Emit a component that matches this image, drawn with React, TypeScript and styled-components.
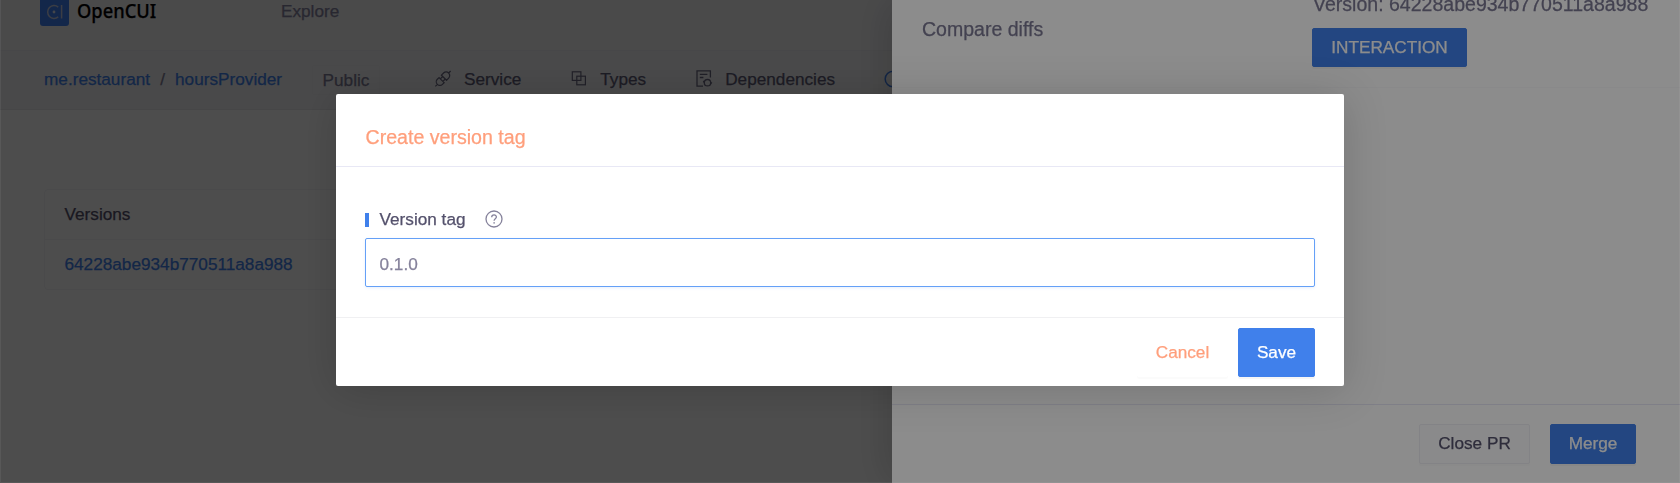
import React from "react";
import styled, { createGlobalStyle } from "styled-components";

const primary = "#4080eb";
const ink = "#54516c";

const GlobalStyle = createGlobalStyle`
  * { box-sizing: border-box; }
  html, body { margin: 0; height: 100%; overflow: hidden; }
  body {
    font-family: "Liberation Sans", Arial, sans-serif;
    font-size: 17.2px;
    line-height: 20px;
    color: ${ink};
    background: #fff;
    -webkit-text-stroke: 0.25px;
  }
`;

const Page = styled.div`
  height: 483px;
  overflow: hidden;
  background: #fff;
`;

const TopBar = styled.header`
  display: flex;
  align-items: flex-start;
  height: 51px;
  padding-left: 40px;
  background: #f3f3f6;
  border-bottom: 1px solid #ececf0;
`;

const LogoMark = styled.svg`
  display: block;
  width: 29px;
  height: 29px;
  margin-top: -3px;
`;

const Brand = styled.span`
  width: 203px;
  margin-left: 8px;
  font-family: "Noto Sans", sans-serif;
  font-size: 20px;
  font-weight: 500;
  line-height: 22px;
  color: #000;
  transform: scaleX(0.915);
  transform-origin: 0 0;
`;

const TopLink = styled.span`
  margin-left: 1px;
  padding-top: 1px;
  color: #8583a0;
`;

const SubBar = styled.nav`
  display: flex;
  align-items: flex-start;
  height: 59px;
  padding: 14px 0 0 44px;
  white-space: nowrap;
  background: #f2f2f5;
  border-bottom: 1px solid #e6e6ea;
`;

const Crumbs = styled.div`
  display: flex;
  width: 268px;
  padding-top: 4px;
  color: #7c7a94;
`;

const Link = styled.span`
  color: ${primary};
`;

const Slash = styled.span`
  width: 25px;
  text-align: center;
`;

const Tag = styled.span`
  width: 68px;
  height: 30px;
  padding-top: 4px;
  text-align: center;
  color: #7c7a94;
  border: 1px solid #eeeef2;
  border-radius: 2px;
`;

const Tab = styled.div<{ $left: number; $gap: number }>`
  display: flex;
  gap: ${(p) => p.$gap}px;
  margin-left: ${(p) => p.$left}px;
  padding-top: 4px;
  color: #5d5a75;
  svg { display: block; margin-top: 1px; }
`;

const Card = styled.section`
  width: 1590px;
  margin: 79px 0 0 44px;
  border: 1px solid #f5f5f8;
  border-radius: 4px;
`;

const CardRow = styled.div<{ $head?: boolean }>`
  height: ${(p) => (p.$head ? 50 : 49)}px;
  padding: 14px 19.5px 0;
  color: ${(p) => (p.$head ? ink : primary)};
  border-bottom: ${(p) => (p.$head ? "1px solid #f5f5f8" : "0")};
`;

const Mask = styled.div`
  position: fixed;
  inset: 0;
  display: flex;
  background: rgba(0, 0, 0, 0.45);
`;

const Drawer = styled.aside`
  display: flex;
  flex-direction: column;
  width: 788px;
  height: 100%;
  margin-left: auto;
  background: #fff;
  box-shadow: -6px 0 38px rgba(0, 0, 0, 0.15);
`;

const DrawerHead = styled.div`
  display: flex;
  justify-content: space-between;
  flex: none;
  height: 88px;
  padding: 0 29px 0 30px;
  font-size: 19.55px;
  line-height: 22px;
  color: #7b7893;
  border-bottom: 1px solid #f9f9fb;
`;

const DrawerTitle = styled.div`
  padding-top: 18px;
`;

const VersionInfo = styled.div`
  width: 339px;
`;

const VersionLine = styled.div`
  height: 28px;
  margin-top: -7px;
  margin-bottom: 7px;
  padding-left: 1px;
  white-space: nowrap;
`;

const DrawerBody = styled.div`
  flex: 1;
`;

const DrawerFoot = styled.footer`
  display: flex;
  flex: none;
  justify-content: flex-end;
  height: 79px;
  gap: 20px;
  padding: 19px 44px 0 0;
  border-top: 1px solid #e7e7f6;
`;

const Button = styled.button<{
  $w: number;
  $h: number;
  $kind: "primary" | "plain" | "text";
}>`
  width: ${(p) => p.$w}px;
  height: ${(p) => p.$h}px;
  padding: 0 0 2px;
  font: inherit;
  font-size: 17.2px;
  line-height: 20px;
  text-align: center;
  border-radius: 2px;
  border: 1px solid ${(p) =>
    p.$kind === "plain" ? "#efeff5" : p.$kind === "primary" ? primary : "transparent"};
  background: ${(p) =>
    p.$kind === "primary" ? primary : p.$kind === "plain" ? "#fcfcfd" : "#fff"};
  color: ${(p) =>
    p.$kind === "primary" ? "#fff" : p.$kind === "plain" ? ink : "#ff9f7c"};
  box-shadow: 0 2px 0 rgba(0, 0, 0, ${(p) => (p.$kind === "primary" ? 0.035 : 0.016)});
`;

const Modal = styled.div`
  display: flex;
  flex-direction: column;
  width: 1008px;
  height: 292px;
  margin: 94px auto 0;
  background: #fff;
  border-radius: 2px;
  box-shadow: 0 4px 44px rgba(0, 0, 0, 0.17);
`;

const ModalHead = styled.header`
  height: 73px;
  padding: 32px 29.5px 0;
  font-size: 19.6px;
  line-height: 22px;
  color: #ff9f7c;
  border-bottom: 1px solid #e8e8f5;
`;

const ModalBody = styled.div`
  flex: 1;
  padding: 42px 29px 0;
`;

const FieldLabel = styled.div`
  display: flex;
  height: 29px;
  svg { display: block; margin: 1px 0 0 19px; }
`;

const Marker = styled.span`
  width: 4px;
  height: 14px;
  margin: 4px 10.5px 0 0;
  background: ${primary};
`;

const Input = styled.input`
  display: block;
  width: 950px;
  height: 49px;
  padding: 3px 13.5px 0;
  font: inherit;
  color: #85829b;
  border: 1px solid #65a0f7;
  border-radius: 2px;
  outline: none;
  box-shadow: 0 1px 3px rgba(64, 128, 235, 0.12);
`;

const ModalFoot = styled.footer`
  display: flex;
  justify-content: flex-end;
  height: 69px;
  gap: 10px;
  padding: 10px 29px 0 0;
  border-top: 1px solid #f0f0f2;
`;

const WindowEdge = styled.div`
  position: fixed;
  inset: 0;
  pointer-events: none;
  border: solid rgba(255, 255, 255, 0.06);
  border-width: 0 1px 1px 1px;
`;

const Logo = () => (
  <LogoMark viewBox="0 0 29 29" fill="none">
    <rect width="29" height="29" rx="3" fill="#4080f5" />
    <path d="M18.2 10.1A6.4 6.4 0 1 0 18.2 19.9" stroke="#c3cbe0" strokeWidth="1.5" />
    <circle cx="14" cy="15" r="1.4" fill="#dfe6f5" />
    <path d="M21.6 8V21.5" stroke="#c3cbe0" strokeWidth="1.5" />
  </LogoMark>
);

const ServiceIcon = () => (
  <svg width="18" height="18" viewBox="0 0 18 18" fill="none" stroke="#6a6880" strokeWidth="1.25">
    <g transform="translate(9 8.7) rotate(-45)">
      <path d="M-10.8 0H-8M-2 -3.6H-4.4A3.6 3.6 0 0 0 -4.4 3.6H-2ZM-2 -1.8H1.4M-2 1.8H1.4" />
      <path d="M10.8 0H8M1.4 -3.6H4.4A3.6 3.6 0 0 1 4.4 3.6H1.4Z" />
    </g>
  </svg>
);

const TypesIcon = () => (
  <svg width="16" height="18" viewBox="0 0 16 18" fill="none" stroke="#6a6880" strokeWidth="1.2">
    <rect x="1.3" y="1.8" width="8.6" height="8.6" />
    <rect x="5.8" y="6.2" width="8.6" height="8.6" />
  </svg>
);

const DependenciesIcon = () => (
  <svg width="17" height="18" viewBox="0 0 17 18" fill="none" stroke="#6a6880" strokeWidth="1.3">
    <path d="M7 16.2H1V0.8H14.4V7.5M3.8 4.3H11.4M3.8 7.5H7.4" />
    <circle cx="11.5" cy="12.7" r="3.2" />
    <path d="M7.3 11 8.6 12.8M14.4 14.2 15.8 12.4" />
  </svg>
);

const RingIcon = () => (
  <svg width="18" height="19" viewBox="0 0 18 19" fill="none" stroke={primary} strokeWidth="1.5">
    <circle cx="9" cy="9" r="7.8" />
  </svg>
);

const HelpIcon = () => (
  <svg width="18" height="18" viewBox="0 0 18 18" fill="none" stroke="#85829b" strokeWidth="1.3">
    <circle cx="9" cy="9" r="8" />
    <path d="M6.7 7.2C6.7 4.2 11.4 4.2 11.4 7C11.4 8.7 9.1 8.8 9.1 10.7" />
    <circle cx="9.1" cy="12.9" r="0.8" fill="#85829b" stroke="none" />
  </svg>
);

export default function App() {
  return (
    <>
      <GlobalStyle />
      <Page>
        <TopBar>
          <Logo />
          <Brand>OpenCUI</Brand>
          <TopLink>Explore</TopLink>
        </TopBar>
        <SubBar>
          <Crumbs>
            <Link>me.restaurant</Link>
            <Slash>/</Slash>
            <Link>hoursProvider</Link>
          </Crumbs>
          <Tag>Public</Tag>
          <Tab $left={54} $gap={12}>
            <ServiceIcon />
            Service
          </Tab>
          <Tab $left={50} $gap={13}>
            <TypesIcon />
            Types
          </Tab>
          <Tab $left={50} $gap={12}>
            <DependenciesIcon />
            Dependencies
          </Tab>
          <Tab $left={49} $gap={12}>
            <RingIcon />
            Versions
          </Tab>
        </SubBar>
        <Card>
          <CardRow $head>Versions</CardRow>
          <CardRow>64228abe934b770511a8a988</CardRow>
        </Card>
      </Page>

      <Mask>
        <Drawer>
          <DrawerHead>
            <DrawerTitle>Compare diffs</DrawerTitle>
            <VersionInfo>
              <VersionLine>Version: 64228abe934b770511a8a988</VersionLine>
              <Button $kind="primary" $w={155} $h={39}>INTERACTION</Button>
            </VersionInfo>
          </DrawerHead>
          <DrawerBody />
          <DrawerFoot>
            <Button $kind="plain" $w={111} $h={40}>Close PR</Button>
            <Button $kind="primary" $w={86} $h={40}>Merge</Button>
          </DrawerFoot>
        </Drawer>
      </Mask>

      <Mask>
        <Modal role="dialog" aria-label="Create version tag">
          <ModalHead>Create version tag</ModalHead>
          <ModalBody>
            <FieldLabel>
              <Marker />
              Version tag
              <HelpIcon />
            </FieldLabel>
            <Input defaultValue="0.1.0" />
          </ModalBody>
          <ModalFoot>
            <Button $kind="text" $w={91} $h={49}>Cancel</Button>
            <Button $kind="primary" $w={77} $h={49}>Save</Button>
          </ModalFoot>
        </Modal>
      </Mask>
      <WindowEdge />
    </>
  );
}
